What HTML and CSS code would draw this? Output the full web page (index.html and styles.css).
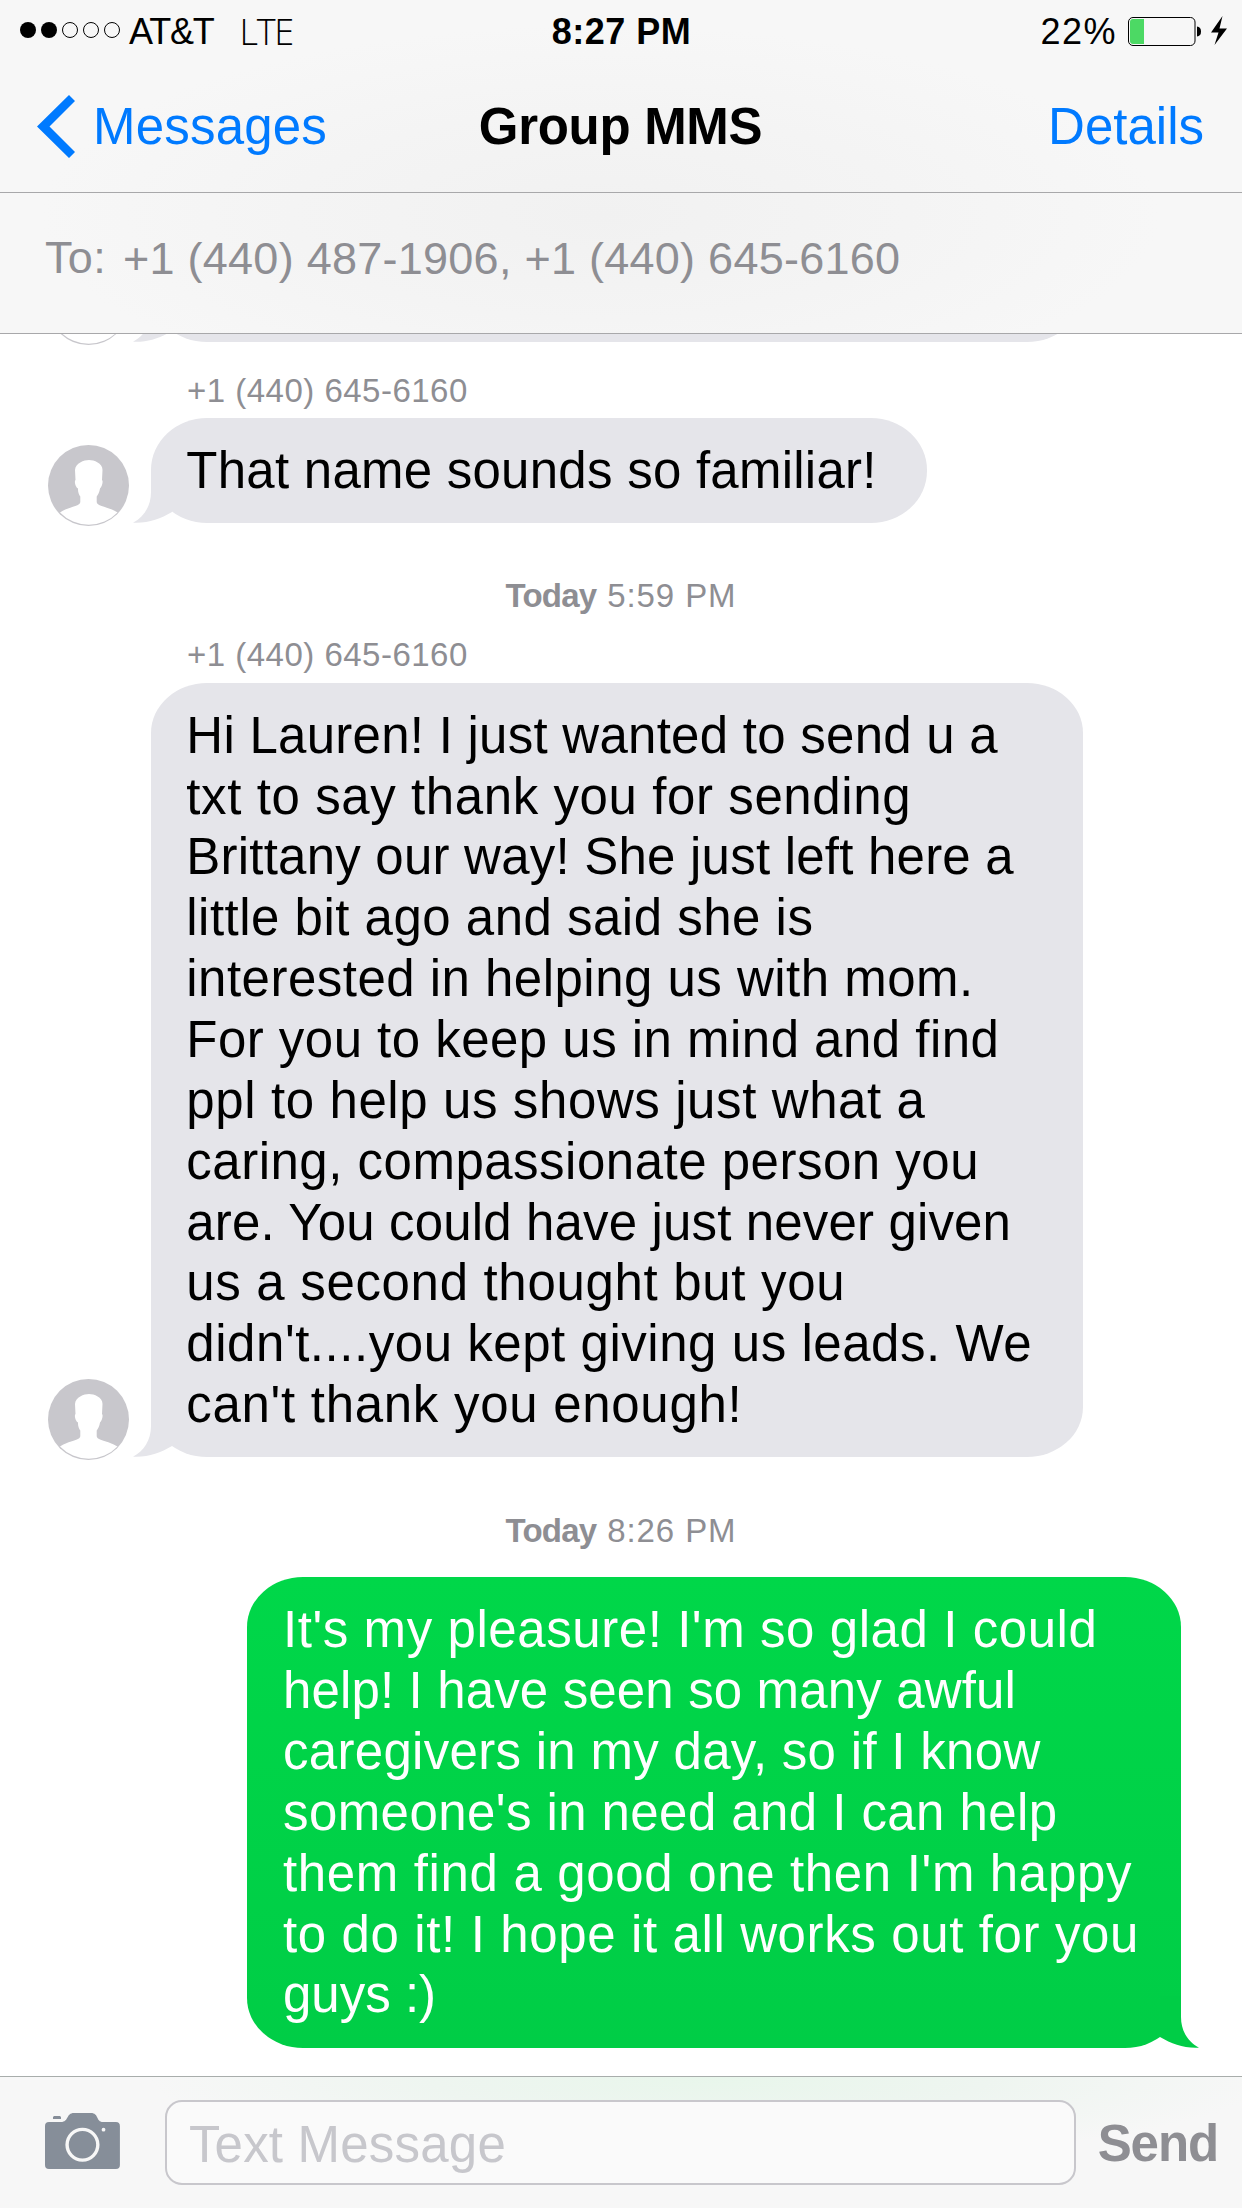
FILE: index.html
```
<!DOCTYPE html>
<html lang="en">
<head>
<meta charset="utf-8">
<title>Group MMS</title>
<link rel="stylesheet" href="styles.css">
</head>
<body>
<svg class="defs" aria-hidden="true">
  <symbol id="avatar" viewBox="0 0 81 81">
    <circle cx="40.5" cy="40.5" r="40.5" fill="#c8c7cc"/>
    <path fill="#fff" d="M41 15C46 15 54.5 18 54.5 25L54 35C55.5 36 54 42 52 43.500C51.500 47 50 50 48.700 51.500V57C48.700 61.500 60 61.500 69.500 67.500A39.800 39.800 0 0 1 12 67.500C21 61.500 32.300 61.500 32.300 57V51.500C31 50 29.800 47 30 43.500C27.500 42.500 26 36 27.500 35L27 25C27.500 18 36 15 41 15Z"/>
  </symbol>
  <symbol id="tail" viewBox="0 0 40 52">
    <path d="M18 0V21C18 35 11 46 0 51.700C15 52.500 27 48 39 41V0Z"/>
  </symbol>
</svg>
<div class="screen">
  <header class="header">
    <div class="status">
      <div class="status-left">
        <svg class="signal" viewBox="0 0 100 16">
          <circle cx="8" cy="8" r="8"/><circle cx="29" cy="8" r="8"/>
          <g fill="none" stroke="#000"><circle cx="50" cy="8" r="7.500"/><circle cx="71" cy="8" r="7.500"/><circle cx="92" cy="8" r="7.500"/></g>
        </svg>
        <span class="carrier">AT&amp;T</span>
        <span class="network">LTE</span>
      </div>
      <div class="clock">8:27 PM</div>
      <div class="status-right">
        <span class="percent">22%</span>
        <svg class="battery" viewBox="0 0 100 30">
          <rect x="0.500" y="1.500" width="66.500" height="28" rx="4.500" fill="none" stroke="#000"/>
          <path d="M5 3H16V28H5Q2 28 2 25V6Q2 3 5 3Z" fill="#4cd964"/>
          <path d="M69 10.500Q73 11 73 15.500T69 20.500Z"/>
          <path d="M94.500 0L83 16.500H90.500L86.500 29L99 12.500H91.500Z"/>
        </svg>
      </div>
    </div>
    <nav class="nav">
      <a class="back"><svg class="chevron" viewBox="0 0 38 63"><path d="M32 0L38 6L12.500 31.500L38 57L32 63L0 31.500Z"/></svg><span>Messages</span></a>
      <h1 class="title">Group MMS</h1>
      <a class="details">Details</a>
    </nav>
    <div class="recipients"><span class="to">To:</span><span class="numbers">+1 (440) 487-1906, +1 (440) 645-6160</span></div>
  </header>

  <main class="chat">
    <div class="row">
      <svg class="avatar"><use href="#avatar"/></svg>
      <div class="bubble received earlier"><svg class="tail"><use href="#tail"/></svg></div>
    </div>
    <div class="sender">+1 (440) 645-6160</div>
    <div class="row">
      <svg class="avatar"><use href="#avatar"/></svg>
      <div class="bubble received short"><svg class="tail"><use href="#tail"/></svg><span>That name sounds so familiar!</span></div>
    </div>
    <div class="stamp"><b>Today</b><span>5:59 PM</span></div>
    <div class="sender after-stamp">+1 (440) 645-6160</div>
    <div class="row">
      <svg class="avatar"><use href="#avatar"/></svg>
      <div class="bubble received long"><svg class="tail"><use href="#tail"/></svg>
        <p>
          <span>Hi Lauren! I just wanted to send u a</span>
          <span>txt to say thank you for sending</span>
          <span>Brittany our way! She just left here a</span>
          <span>little bit ago and said she is</span>
          <span>interested in helping us with mom.</span>
          <span>For you to keep us in mind and find</span>
          <span>ppl to help us shows just what a</span>
          <span>caring, compassionate person you</span>
          <span>are. You could have just never given</span>
          <span>us a second thought but you</span>
          <span>didn't....you kept giving us leads. We</span>
          <span>can't thank you enough!</span>
        </p>
      </div>
    </div>
    <div class="stamp"><b>Today</b><span>8:26 PM</span></div>
    <div class="row sent-row">
      <div class="bubble sent"><svg class="tail"><use href="#tail"/></svg>
        <p>
          <span>It's my pleasure! I'm so glad I could</span>
          <span>help! I have seen so many awful</span>
          <span>caregivers in my day, so if I know</span>
          <span>someone's in need and I can help</span>
          <span>them find a good one then I'm happy</span>
          <span>to do it! I hope it all works out for you</span>
          <span>guys :)</span>
        </p>
      </div>
    </div>
  </main>

  <footer class="toolbar">
    <svg class="camera" viewBox="0 0 75 56">
      <path fill="#868e99" d="M4 9H16C24 9 21 0 29 0H46C54 0 51 9 58 9H71Q75 9 75 13V52Q75 56 71 56H4Q0 56 0 52V13Q0 9 4 9Z"/>
      <path fill="#868e99" d="M9 3H15L16 4V6H8V4Z"/>
      <circle cx="37.500" cy="31.800" r="15.400" fill="none" stroke="#f7f7f7" stroke-width="3.400"/>
      <circle cx="58.600" cy="16.700" r="1.900" fill="#f7f7f7"/>
    </svg>
    <div class="field">Text Message</div>
    <div class="send">Send</div>
  </footer>
</div>
</body>
</html>
```
FILE: styles.css
```
* { box-sizing: border-box; }
body { margin: 0; background: #fff; }
h1, p { margin: 0; }
.defs { display: none; }

.screen {
  width: 1242px;
  height: 2208px;
  display: flex;
  flex-direction: column;
  overflow: hidden;
  font: 51px/57px "Liberation Sans", Arial, sans-serif;
  color: #000;
  white-space: nowrap;
}

/* Header */
.header {
  flex: none;
  background: radial-gradient(ellipse 560px 190px at 600px 215px, #f1f1f1, #f4f4f4 55%, #f7f7f7);
}
.status {
  height: 60px;
  padding: 3px 14px 0 20px;
  display: grid;
  grid-template-columns: 1fr auto 1fr;
  align-items: center;
  font-size: 36px;
  line-height: 40px;
}
.status-left, .status-right { display: flex; align-items: center; }
.status-right { justify-content: flex-end; }
.signal { width: 100px; height: 16px; margin: -3px 9px 0 0; }
.carrier { letter-spacing: -1.2px; margin-right: 26px; }
.network { font-family: "Open Sans", sans-serif; font-weight: 300; letter-spacing: -1.3px; }
.clock { font-weight: bold; letter-spacing: 0.5px; margin-left: -5px; }
.percent { letter-spacing: 1.5px; margin-right: 11px; }
.battery { width: 100px; height: 30px; margin-top: -2px; }

.nav {
  height: 133px;
  padding: 1px 38px 0 37px;
  display: grid;
  grid-template-columns: 1fr auto 1fr;
  align-items: center;
  border-bottom: 1px solid #a8a8aa;
}
.back { display: flex; align-items: center; gap: 18px; color: #007aff; letter-spacing: 0.2px; }
.chevron { width: 38px; height: 63px; fill: #007aff; }
.title { font-size: 51px; line-height: 57px; letter-spacing: -0.3px; }
.details { color: #007aff; justify-self: end; }

.recipients {
  height: 141px;
  padding: 0 45px 10px;
  display: flex;
  align-items: center;
  gap: 17px;
  border-bottom: 1px solid #a8a8aa;
  font-size: 45px;
  line-height: 50px;
  color: #8e8e93;
}
.to { letter-spacing: 0.3px; }
.numbers { letter-spacing: 0.26px; padding-top: 1px; }

/* Conversation */
.chat {
  flex: 1;
  min-height: 0;
  padding: 0 61px 28.5px 48px;
  display: flex;
  flex-direction: column;
  justify-content: flex-end;
  overflow: hidden;
}
.row { flex: none; display: flex; align-items: flex-end; gap: 22px; }
.sent-row { justify-content: flex-end; }
.avatar { width: 81px; height: 81px; margin-bottom: -3px; }

.bubble {
  position: relative;
  padding: 23px 34px 21.2px 35.3px;
  border-radius: 56px / 50px;
  line-height: 60.85px;
}
.bubble span { display: block; }
.received { background: #e5e5ea; }
.sent { width: 934px; background: linear-gradient(#00d749, #00cd46); color: #fff; padding-left: 36px; }
.earlier { width: 932px; height: 104.5px; }
.short { width: 776px; border-radius: 56px / 52px; letter-spacing: 0.25px; }
.long { width: 932px; }
.tail { position: absolute; left: -18px; bottom: 0; width: 40px; height: 52px; fill: #e5e5ea; }
.sent .tail { left: auto; right: -18px; fill: #00cd46; transform: scaleX(-1); }

.long span:nth-child(1) { letter-spacing: 0.26px; }
.long span:nth-child(2) { letter-spacing: 0.59px; }
.long span:nth-child(3) { letter-spacing: 0.22px; }
.long span:nth-child(4) { letter-spacing: 0.49px; }
.long span:nth-child(5) { letter-spacing: 0.48px; }
.long span:nth-child(6) { letter-spacing: 0.47px; }
.long span:nth-child(7) { letter-spacing: 0.6px; }
.long span:nth-child(8) { letter-spacing: 0.5px; }
.long span:nth-child(9) { letter-spacing: 0.15px; }
.long span:nth-child(10) { letter-spacing: 0.67px; }
.long span:nth-child(11) { letter-spacing: 0.54px; }
.long span:nth-child(12) { letter-spacing: 0.7px; }

.sent span:nth-child(1) { letter-spacing: 0.57px; }
.sent span:nth-child(2) { letter-spacing: 0.14px; }
.sent span:nth-child(3) { letter-spacing: 0.3px; }
.sent span:nth-child(4) { letter-spacing: 0.42px; }
.sent span:nth-child(5) { letter-spacing: 0.65px; }
.sent span:nth-child(6) { letter-spacing: 0.62px; }

.sender, .stamp { flex: none; font-size: 33px; line-height: 38px; color: #8e8e93; }
.sender { margin: 29.6px 0 7.7px 139px; letter-spacing: 0.49px; }
.after-stamp { margin-top: 21.3px; margin-bottom: 8.4px; }
.stamp {
  display: flex;
  justify-content: center;
  gap: 11px;
  margin: 54.5px 0 0;
  padding-left: 13px;
}
.stamp b { letter-spacing: -0.8px; }
.stamp span { letter-spacing: 0.9px; }
.stamp + .row { margin-top: 27.8px; }

/* Compose bar */
.toolbar {
  flex: none;
  height: 132px;
  padding: 0 24px 0 45px;
  display: flex;
  align-items: center;
  border-top: 1px solid #a8adab;
  background: radial-gradient(ellipse 560px 85px at 710px 0, #e8f6eb, #eef5f0 50%, #f7f7f7);
}
.camera { width: 75px; height: 56px; margin: -3px 45px 0 0; }
.field {
  width: 912px;
  height: 85px;
  padding: 12px 0 0 22px;
  border: 2px solid #c8c7cc;
  border-radius: 17px;
  background: #fafafa;
  color: #c7c7cc;
  line-height: 61px;
  letter-spacing: 0.2px;
}
.send { margin-left: 22px; padding-top: 1px; color: #8e8e93; font-weight: bold; letter-spacing: -1.1px; }
```
